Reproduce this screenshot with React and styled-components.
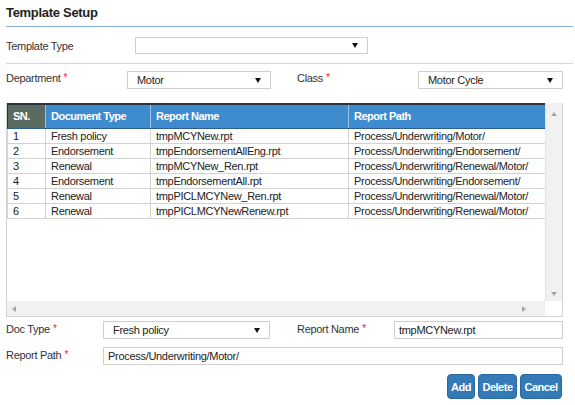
import React from "react";
import styled, { createGlobalStyle } from "styled-components";

const GlobalStyle = createGlobalStyle`
  * { box-sizing: border-box; }
  body {
    margin: 0;
    background: #fff;
    font-family: "Liberation Sans", Arial, sans-serif;
    font-size: 11px;
    letter-spacing: -0.3px;
    color: #333;
  }
`;

const rows = [
  ["1", "Fresh policy", "tmpMCYNew.rpt", "Process/Underwriting/Motor/"],
  ["2", "Endorsement", "tmpEndorsementAllEng.rpt", "Process/Underwriting/Endorsement/"],
  ["3", "Renewal", "tmpMCYNew_Ren.rpt", "Process/Underwriting/Renewal/Motor/"],
  ["4", "Endorsement", "tmpEndorsementAll.rpt", "Process/Underwriting/Endorsement/"],
  ["5", "Renewal", "tmpPICLMCYNew_Ren.rpt", "Process/Underwriting/Renewal/Motor/"],
  ["6", "Renewal", "tmpPICLMCYNewRenew.rpt", "Process/Underwriting/Renewal/Motor/"],
];

const columns = [
  { title: "SN.", width: 38, dark: true },
  { title: "Document Type", width: 105 },
  { title: "Report Name", width: 198 },
  { title: "Report Path", width: 198 },
];

const Page = styled.div`
  width: 575px;
  padding: 0 2px 0 6px;
`;

const Title = styled.h2`
  margin: 0;
  height: 27px;
  padding-top: 5px;
  font-size: 13px;
  font-weight: bold;
  color: #222;
  border-bottom: 1px solid #86add6;
`;

const FormRow = styled.div`
  display: flex;
  align-items: center;
  height: ${(p) => p.h || 18}px;
  margin-top: ${(p) => p.mt || 0}px;
`;

const Label = styled.div`
  width: ${(p) => p.w}px;
  flex-shrink: 0;
  color: #333;
  margin-top: ${(p) => p.up || 0}px;
  margin-left: ${(p) => p.ml || 0}px;
`;

const Req = styled.span`
  color: #e0261f;
  font-size: 10px;
  vertical-align: top;
  margin-left: 3px;
`;

const SelectBox = styled.div`
  width: ${(p) => p.w}px;
  height: ${(p) => p.h || 18}px;
  border: 1px solid #cfcfcf;
  background: #fff;
  display: flex;
  align-items: center;
  justify-content: space-between;
  padding: 0 9px 0 9px;
  color: #222;
  flex-shrink: 0;
`;

const Arrow = styled.span`
  width: 0;
  height: 0;
  border-left: 3.5px solid transparent;
  border-right: 3.5px solid transparent;
  border-top: 5px solid #111;
`;

const TextBox = styled.div`
  width: ${(p) => p.w}px;
  height: 18px;
  border: 1px solid #cfcfcf;
  padding: 0 4px;
  display: flex;
  align-items: center;
  color: #222;
  flex-shrink: 0;
`;

const Divider = styled.div`
  height: 1px;
  background: #d6d6d6;
  margin-top: 9px;
`;

const Grid = styled.div`
  margin-top: 14px;
  width: 557px;
  height: 214px;
  border: 1px solid #d4d4d4;
  border-top: none;
  display: grid;
  grid-template-columns: 538px 17px;
  grid-template-rows: 198px 15px;
`;

const Body = styled.div`
  overflow: hidden;
  background: #fff;
`;

const Table = styled.table`
  border-collapse: collapse;
  table-layout: fixed;
  width: 539px;
`;

const Th = styled.th`
  height: 24px;
  padding: 0 5px;
  text-align: left;
  font-weight: bold;
  font-size: 11px;
  letter-spacing: -0.5px;
  color: #fff;
  background: ${(p) => (p.dark ? "#5b6b5f" : "#3f8bcf")};
  border-top: 2px solid #2b3440;
  border-right: 1px solid #9cc3e6;
  border-bottom: 1px solid #2f5f8c;
  &:first-child {
    border-left: 1px solid #2b3440;
  }
  &:last-child {
    border-right: 1px solid #2f5f8c;
  }
`;

const Td = styled.td`
  height: 15px;
  padding: 1px 4px 0 5px;
  border: 1px solid #d2d2d2;
  color: #222;
  white-space: nowrap;
  overflow: hidden;
  line-height: 13px;
`;

const VScroll = styled.div`
  background: #f1f1f1;
  border-left: 1px solid #e4e4e4;
  display: flex;
  flex-direction: column;
  justify-content: space-between;
  align-items: center;
  padding: 9px 0 5px;
`;

const HScroll = styled.div`
  background: #f1f1f1;
  display: flex;
  justify-content: space-between;
  align-items: center;
  padding: 0 19px 0 5px;
`;

const Corner = styled.div`
  background: #fff;
`;

const Tri = styled.span`
  width: 0;
  height: 0;
  ${(p) =>
    p.dir === "up"
      ? "border-left: 3px solid transparent; border-right: 3px solid transparent; border-bottom: 4px solid #a5a5a5;"
      : p.dir === "down"
      ? "border-left: 3px solid transparent; border-right: 3px solid transparent; border-top: 4px solid #a5a5a5;"
      : p.dir === "left"
      ? "border-top: 3px solid transparent; border-bottom: 3px solid transparent; border-right: 4px solid #a5a5a5;"
      : "border-top: 3px solid transparent; border-bottom: 3px solid transparent; border-left: 4px solid #a5a5a5;"}
`;

const Buttons = styled.div`
  width: 556px;
  display: flex;
  justify-content: flex-end;
  gap: 3px;
  margin-top: 9px;
`;

const Button = styled.button`
  width: ${(p) => p.w}px;
  height: 25px;
  padding: 0;
  border: 1px solid #2a6aa3;
  border-radius: 4px;
  background: #337ab7;
  color: #fff;
  font-family: "Liberation Sans", Arial, sans-serif;
  font-size: 11px;
  font-weight: bold;
  letter-spacing: -0.5px;
  cursor: pointer;
`;

export default function App() {
  return (
    <>
      <GlobalStyle />
      <Page>
        <Title>Template Setup</Title>

        <FormRow h={17} mt={10}>
          <Label w={129}>Template Type</Label>
          <SelectBox w={233} h={17}>
            <span />
            <Arrow />
          </SelectBox>
        </FormRow>

        <Divider />

        <FormRow mt={7}>
          <Label w={121} up={-4}>
            Department<Req>*</Req>
          </Label>
          <SelectBox w={144}>
            <span>Motor</span>
            <Arrow />
          </SelectBox>
          <Label w={121} ml={26} up={-4}>
            Class<Req>*</Req>
          </Label>
          <SelectBox w={145}>
            <span>Motor Cycle</span>
            <Arrow />
          </SelectBox>
        </FormRow>

        <Grid>
          <Body>
            <Table>
              <colgroup>
                {columns.map((c) => (
                  <col key={c.title} style={{ width: c.width }} />
                ))}
              </colgroup>
              <thead>
                <tr>
                  {columns.map((c) => (
                    <Th key={c.title} dark={c.dark}>
                      {c.title}
                    </Th>
                  ))}
                </tr>
              </thead>
              <tbody>
                {rows.map((r) => (
                  <tr key={r[0]}>
                    {r.map((cell, i) => (
                      <Td key={i}>{cell}</Td>
                    ))}
                  </tr>
                ))}
              </tbody>
            </Table>
          </Body>
          <VScroll>
            <Tri dir="up" />
            <Tri dir="down" />
          </VScroll>
          <HScroll>
            <Tri dir="left" />
            <Tri dir="right" />
          </HScroll>
          <Corner />
        </Grid>

        <FormRow mt={4}>
          <Label w={97} up={-3}>
            Doc Type<Req>*</Req>
          </Label>
          <SelectBox w={167}>
            <span>Fresh policy</span>
            <Arrow />
          </SelectBox>
          <Label w={97} ml={27} up={-3}>
            Report Name<Req>*</Req>
          </Label>
          <TextBox w={169}>tmpMCYNew.rpt</TextBox>
        </FormRow>

        <FormRow mt={8}>
          <Label w={97} up={-3}>
            Report Path<Req>*</Req>
          </Label>
          <TextBox w={460}>Process/Underwriting/Motor/</TextBox>
        </FormRow>

        <Buttons>
          <Button w={28}>Add</Button>
          <Button w={39}>Delete</Button>
          <Button w={42}>Cancel</Button>
        </Buttons>
      </Page>
    </>
  );
}
